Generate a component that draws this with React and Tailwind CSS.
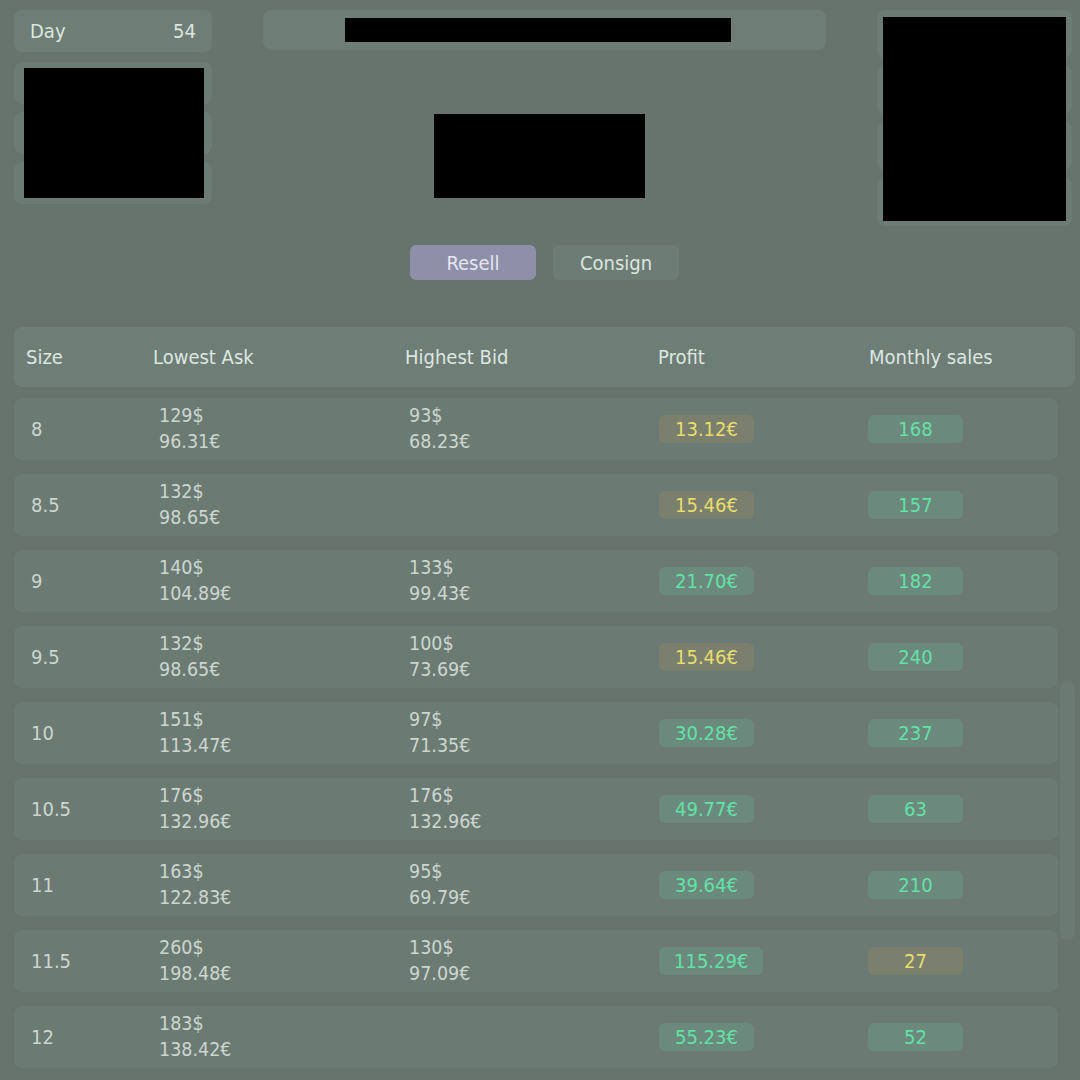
import React from "react";

const rows = [
  { size: "8", ask: ["129$", "96.31€"], bid: ["93$", "68.23€"], profit: "13.12€", pGood: false, sales: "168", sGood: true },
  { size: "8.5", ask: ["132$", "98.65€"], bid: null, profit: "15.46€", pGood: false, sales: "157", sGood: true },
  { size: "9", ask: ["140$", "104.89€"], bid: ["133$", "99.43€"], profit: "21.70€", pGood: true, sales: "182", sGood: true },
  { size: "9.5", ask: ["132$", "98.65€"], bid: ["100$", "73.69€"], profit: "15.46€", pGood: false, sales: "240", sGood: true },
  { size: "10", ask: ["151$", "113.47€"], bid: ["97$", "71.35€"], profit: "30.28€", pGood: true, sales: "237", sGood: true },
  { size: "10.5", ask: ["176$", "132.96€"], bid: ["176$", "132.96€"], profit: "49.77€", pGood: true, sales: "63", sGood: true },
  { size: "11", ask: ["163$", "122.83€"], bid: ["95$", "69.79€"], profit: "39.64€", pGood: true, sales: "210", sGood: true },
  { size: "11.5", ask: ["260$", "198.48€"], bid: ["130$", "97.09€"], profit: "115.29€", pGood: true, sales: "27", sGood: false },
  { size: "12", ask: ["183$", "138.42€"], bid: null, profit: "55.23€", pGood: true, sales: "52", sGood: true },
];

const Badge = ({ good, children, fixed }) => (
  <span
    className={
      "inline-flex h-[28px] items-center justify-center rounded-md px-[15px] text-[20px] leading-none " +
      (fixed ? "w-[95px] " : "min-w-[95px] ") +
      (good ? "bg-[#6c897d] text-[#62e2a6]" : "bg-[#7a806d] text-[#e8de6c]")
    }
  >
    {children}
  </span>
);

const Price = ({ lines }) =>
  lines ? (
    <div className="flex flex-col text-[19.5px] leading-[26px] text-[#ccd6cf]">
      <span>{lines[0]}</span>
      <span>{lines[1]}</span>
    </div>
  ) : null;

export default function App() {
  return (
    <div
      className="h-[1080px] w-[1080px] overflow-hidden bg-[#66746d] text-[#dce6df]"
      style={{ fontFamily: '"DejaVu Sans Condensed", "DejaVu Sans", sans-serif' }}
    >
      {/* TOP */}
      <div className="flex pt-[10px]">
        {/* left column */}
        <div className="ml-[14px] flex w-[198px] flex-col gap-[10px]">
          <div className="flex h-[42px] items-center justify-between rounded-lg bg-[#6f7d77] px-[16px] text-[20px]">
            <span>Day</span>
            <span>54</span>
          </div>
          <div className="relative flex flex-col gap-[8px]">
            <div className="h-[42px] rounded-lg bg-[#6d7b75]" />
            <div className="h-[42px] rounded-lg bg-[#6d7b75]" />
            <div className="h-[42px] rounded-lg bg-[#6d7b75]" />
            <div className="absolute left-[10px] top-[6px] h-[130px] w-[180px] bg-black" />
          </div>
        </div>

        {/* center column */}
        <div className="ml-[51px] flex w-[563px] flex-col">
          <div className="flex h-[40px] items-center rounded-lg bg-[#6f7d77] pl-[82px]">
            <div className="h-[24px] w-[386px] bg-black" />
          </div>
          <div className="ml-[171px] mt-[64px] h-[84px] w-[211px] bg-black" />
        </div>

        {/* right column */}
        <div className="relative ml-[51px] flex w-[195px] flex-col gap-[8px]">
          <div className="h-[48px] rounded-lg bg-[#6d7b75]" />
          <div className="h-[48px] rounded-lg bg-[#6d7b75]" />
          <div className="h-[48px] rounded-lg bg-[#6d7b75]" />
          <div className="h-[48px] rounded-lg bg-[#6d7b75]" />
          <div className="absolute left-[6px] top-[7px] h-[204px] w-[183px] bg-black" />
        </div>
      </div>

      {/* TABS */}
      <div className="mt-[19px] flex justify-center gap-[17px] pl-[9px]">
        <button className="h-[35px] w-[126px] rounded-md bg-[#8e8fa9] text-[20px] text-[#e4e6ee]">
          Resell
        </button>
        <button className="h-[35px] w-[126px] rounded-md bg-[#6e7c76] text-[20px] text-[#dce6df]">
          Consign
        </button>
      </div>

      {/* TABLE HEADER */}
      <div className="ml-[14px] mt-[47px] flex h-[60px] w-[1061px] items-center rounded-lg bg-[#6f7d77] text-[20px] text-[#dde7e0]">
        <span className="w-[139px] pl-[12px]">Size</span>
        <span className="w-[252px]">Lowest Ask</span>
        <span className="w-[253px]">Highest Bid</span>
        <span className="w-[211px]">Profit</span>
        <span>Monthly sales</span>
      </div>

      {/* TABLE BODY */}
      <div className="ml-[14px] mt-[11px] flex">
        <div className="flex w-[1044px] flex-col gap-[14px]">
          {rows.map((r) => (
            <div
              key={r.size}
              className="flex h-[62px] items-center rounded-lg bg-[#6c7a74]"
            >
              <span className="w-[145px] pl-[17px] text-[20px] text-[#ccd6cf]">{r.size}</span>
              <div className="w-[250px]">
                <Price lines={r.ask} />
              </div>
              <div className="w-[250px]">
                <Price lines={r.bid} />
              </div>
              <div className="w-[209px]">
                <Badge good={r.pGood}>{r.profit}</Badge>
              </div>
              <div>
                <Badge good={r.sGood} fixed>
                  {r.sales}
                </Badge>
              </div>
            </div>
          ))}
        </div>
        <div className="ml-[2px] w-[16px]">
          <div className="mt-[284px] h-[258px] w-[15px] rounded-full bg-[#6c7a74]" />
        </div>
      </div>
    </div>
  );
}
